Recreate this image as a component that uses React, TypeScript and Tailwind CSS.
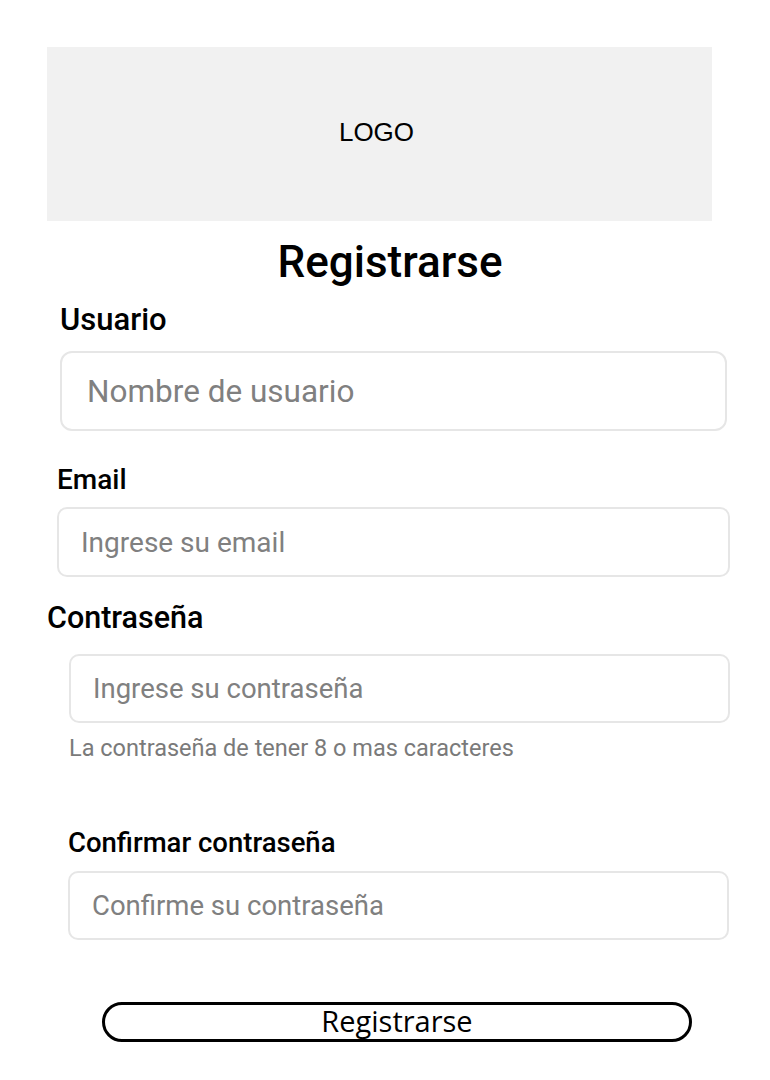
const ROBOTO = "font-['Roboto',sans-serif]";

export default function App() {
  return (
    <div className={`flex w-[770px] min-h-[1080px] flex-col bg-white pt-[47px] text-black ${ROBOTO}`}>
      {/* Logo placeholder */}
      <div className="ml-[47px] flex h-[174px] w-[665px] items-center justify-center bg-[#f1f1f1] pr-[6px] pb-[4px]">
        <span className="font-['Liberation_Sans',Arial,sans-serif] text-[26px] leading-none">LOGO</span>
      </div>

      <h1 className="mt-[17px] pl-[10px] text-center text-[44px] font-medium leading-[48px]">Registrarse</h1>

      {/* Usuario */}
      <label className="ml-[60px] mt-[17px] text-[31px] font-medium leading-[34px]">Usuario</label>
      <input
        placeholder="Nombre de usuario"
        className="ml-[60px] mt-[14px] h-[80px] w-[667px] rounded-[12px] border-2 border-[#e6e6e6] px-[25px] text-[31.5px] outline-none placeholder:text-[#808080]"
      />

      {/* Email */}
      <label className="ml-[57px] mt-[34px] text-[28px] font-medium leading-[30px]">Email</label>
      <input
        placeholder="Ingrese su email"
        className="ml-[57px] mt-[12px] h-[70px] w-[673px] rounded-[10px] border-2 border-[#e6e6e6] px-[22px] text-[28px] outline-none placeholder:text-[#808080]"
      />

      {/* Contraseña */}
      <label className="ml-[47px] mt-[26px] text-[30.5px] font-medium leading-[30px]">Contraseña</label>
      <input
        type="password"
        placeholder="Ingrese su contraseña"
        className="ml-[69px] mt-[21px] h-[69px] w-[661px] rounded-[10px] border-2 border-[#e6e6e6] px-[22px] text-[27.5px] outline-none placeholder:text-[#808080]"
      />
      <p className="ml-[69px] mt-[13px] text-[23.5px] leading-[24px] text-[#7a7a7a]">
        La contraseña de tener 8 o mas caracteres
      </p>

      {/* Confirmar */}
      <label className="ml-[68px] mt-[68px] text-[27.5px] font-medium leading-[30px]">Confirmar contraseña</label>
      <input
        type="password"
        placeholder="Confirme su contraseña"
        className="ml-[68px] mt-[13px] h-[69px] w-[661px] rounded-[10px] border-2 border-[#e6e6e6] px-[22px] text-[27.5px] outline-none placeholder:text-[#808080]"
      />

      <button className="ml-[102px] mt-[62px] flex h-[40px] w-[590px] items-center justify-center rounded-[20px] border-[3px] border-black pb-[4px] font-['Open_Sans',sans-serif] text-[29px] leading-none">
        Registrarse
      </button>
    </div>
  );
}
